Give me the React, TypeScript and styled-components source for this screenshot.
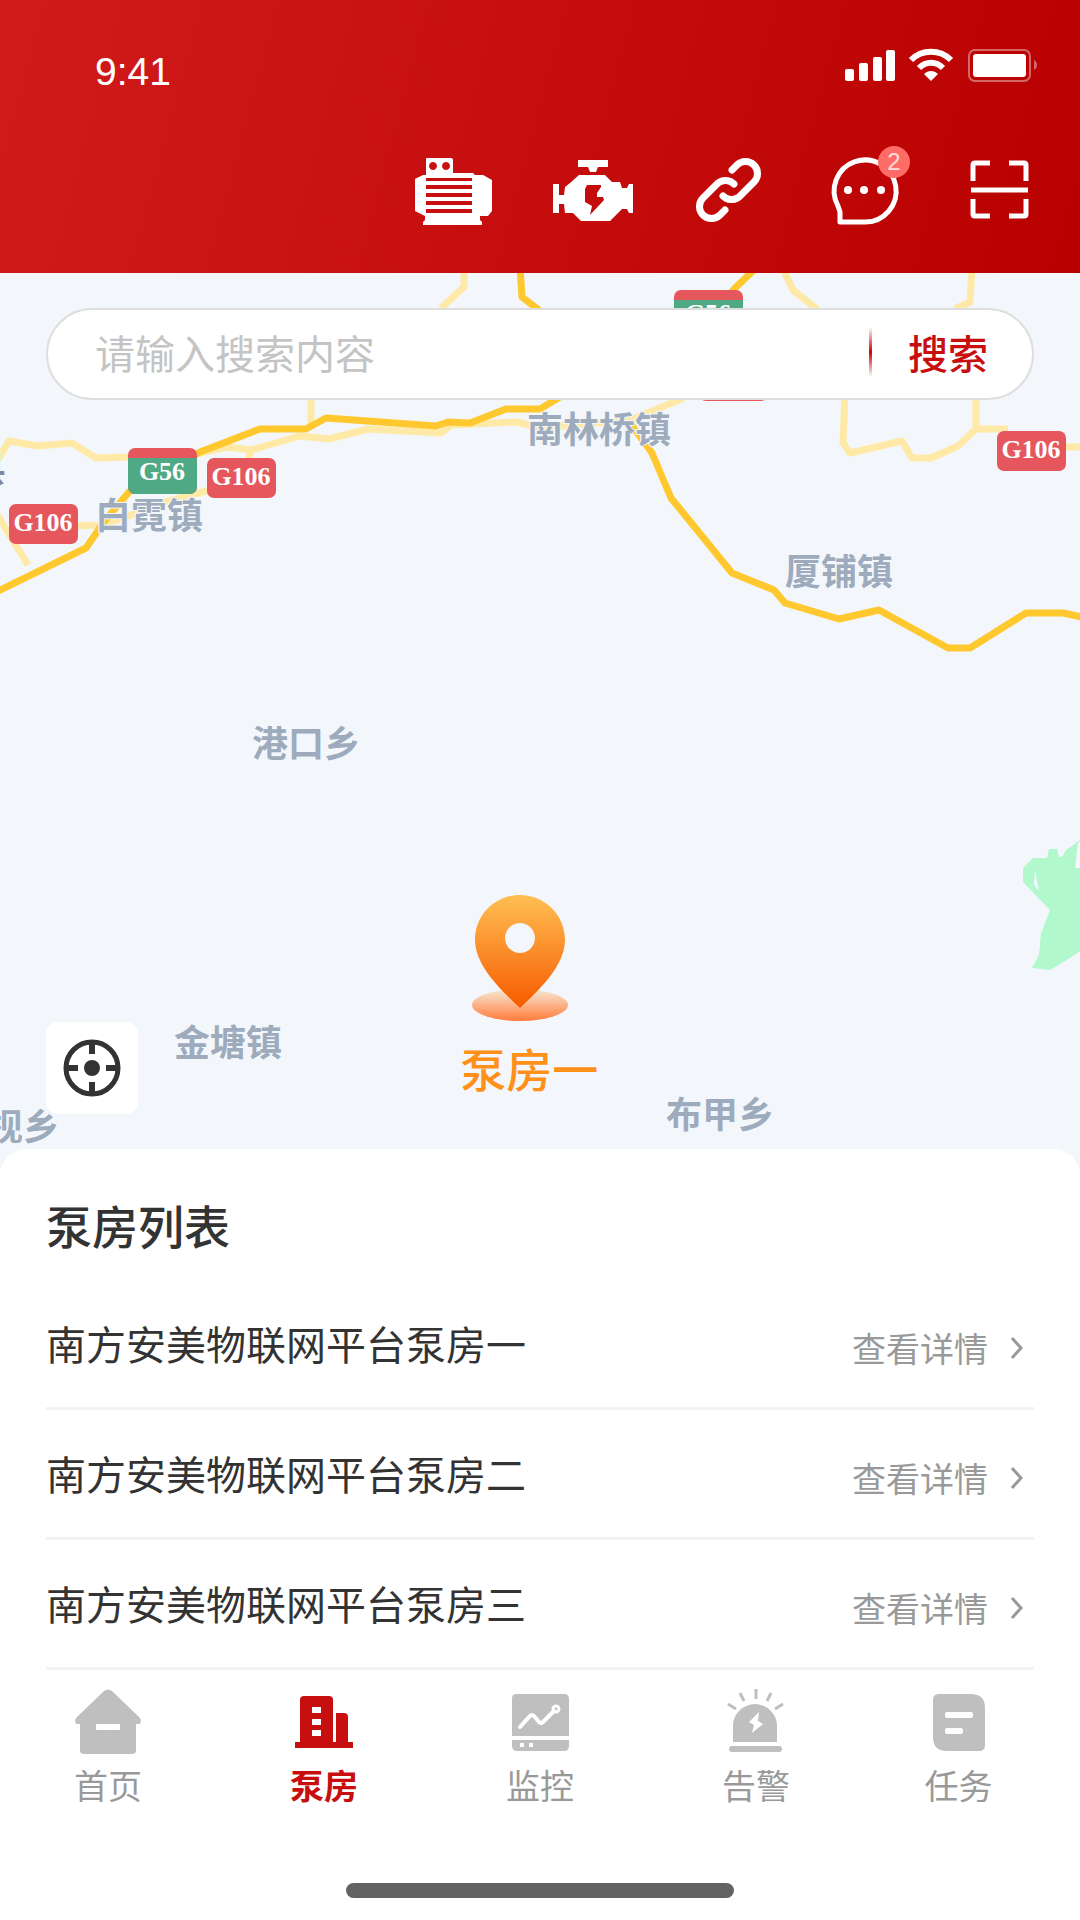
import React, { useState } from "react";
import styled, { createGlobalStyle } from "styled-components";

const palette = {
  primary: "#c70f0f",
  header_from: "#d11b1a",
  header_to: "#b90000",
  map: "#f3f7fc",
  road: "#ffc82e",
  road_light: "#ffe9a6",
  shield_red: "#e5575d",
  shield_green: "#50a985",
  place: "#9dabbd",
  marker: "#ff911a",
  text1: "#333333",
  text2: "#999999",
  placeholder: "#c4c4c4",
  icon: "#bfbfbf",
  line: "#f3f3f3",
};

interface IRoom {
  id: number;
  name: string;
}

interface IPlace {
  name: string;
  x: number;
  y: number;
  anchor?: "middle" | "end";
  color?: string;
}

interface IShield {
  code: string;
  x: number;
  y: number;
}

const ROOMS: IRoom[] = [
  { id: 1, name: "南方安美物联网平台泵房一" },
  { id: 2, name: "南方安美物联网平台泵房二" },
  { id: 3, name: "南方安美物联网平台泵房三" },
];

const PLACES: IPlace[] = [
  { name: "白霓镇", x: 149, y: 256 },
  { name: "南林桥镇", x: 599, y: 170 },
  { name: "厦铺镇", x: 839, y: 312 },
  { name: "港口乡", x: 306, y: 484 },
  { name: "金塘镇", x: 228, y: 783 },
  { name: "布甲乡", x: 720, y: 855 },
  { name: "高枧乡", x: 59, y: 867, anchor: "end" },
  { name: "崇阳县", x: 6, y: 209, anchor: "end", color: "#7f8b9c" },
];

const SHIELDS: IShield[] = [
  { code: "G106", x: 9, y: 231 },
  { code: "G56", x: 128, y: 175 },
  { code: "G106", x: 207, y: 185 },
  { code: "G106", x: 997, y: 158 },
  { code: "G56", x: 674, y: 17 },
  { code: "G106", x: 699, y: 88 },
];

const LIGHT_ROADS = [
  "M464 -6V14L441 35",
  "M311 120V156",
  "M-4 190L9 168L38 173L72 170L96 185L130 184",
  "M-4 240L6 256L28 292",
  "M74 253L103 252L131 242L165 229L210 217",
  "M196 181L227 174L251 177L300 163L329 166L368 156L441 160L451 152L517 149L540 155L630 147L684 125",
  "M251 177L248 188",
  "M782 -6L793 17L818 37",
  "M972 -6L970 29L955 36",
  "M845 120L843 170L850 180L902 168L912 185H931L958 173L976 156V120",
  "M976 156H1008",
  "M1060 174H1086",
];

const MAIN_ROADS = [
  "M-6 320L86 275L103 250L129 219L200 179L260 156H306L326 145L436 153L448 149L470 150L506 136H540L560 124",
  "M520 -6L522 24L540 38",
  "M757 -6L735 15L715 40",
  "M630 150L652 180L671 225L732 300L774 317L785 330L839 346L879 337L948 375H970L1026 340H1063L1086 345",
];

function Shield({ code, x, y }: IShield) {
  const isExpressway = code === "G56";

  return (
    <g transform={`translate(${x} ${y})`}>
      <rect
        width="69"
        height={isExpressway ? 46 : 40}
        rx="7"
        fill={palette.shield_red}
      />
      {isExpressway && (
        <path
          d="M0 10H69V39a7 7 0 0 1-7 7H7a7 7 0 0 1-7-7Z"
          fill={palette.shield_green}
        />
      )}
      <ShieldText x="34" y={isExpressway ? 32 : 27}>
        {code}
      </ShieldText>
    </g>
  );
}

function MapCanvas() {
  return (
    <Canvas viewBox="0 0 1080 876" preserveAspectRatio="xMidYMin slice">
      <path
        d="M1023 595L1033 585H1047L1049 576H1057L1059 584H1062L1066 577L1086 563V674L1070 685L1050 697L1032 695L1039 682L1041 660L1050 637L1023 609Z"
        fill="#b2f8cd"
      />
      <path
        d="M1035 597L1039 618L1034 612ZM1078 570L1075 595H1086V566Z"
        fill={palette.map}
      />
      <g
        fill="none"
        stroke={palette.road_light}
        strokeWidth="7"
        strokeLinejoin="round"
      >
        {LIGHT_ROADS.map((d) => (
          <path key={d} d={d} />
        ))}
      </g>
      <g
        fill="none"
        stroke={palette.road}
        strokeWidth="7"
        strokeLinejoin="round"
      >
        {MAIN_ROADS.map((d) => (
          <path key={d} d={d} />
        ))}
      </g>
      {SHIELDS.map((shield) => (
        <Shield key={`${shield.x}-${shield.y}`} {...shield} />
      ))}
      {PLACES.map(({ name, x, y, anchor = "middle", color }) => (
        <PlaceText
          key={name}
          x={x}
          y={y}
          textAnchor={anchor}
          fill={color || palette.place}
        >
          {name}
        </PlaceText>
      ))}
    </Canvas>
  );
}

function StatusIcons() {
  return (
    <svg width="194" height="36" viewBox="0 0 194 36" fill="#fff">
      <rect x="1" y="21" width="9" height="12" rx="2" />
      <rect x="15" y="15" width="9" height="18" rx="2" />
      <rect x="29" y="9" width="9" height="24" rx="2" />
      <rect x="42" y="2" width="9" height="31" rx="2" />
      <g fill="none" stroke="#fff" strokeWidth="6">
        <path d="M67 12C78 1 96 1 107 12" />
        <path d="M75 20C82 13 92 13 99 20" />
      </g>
      <path d="M87 33L80 26C84 22 90 22 94 26Z" />
      <rect
        x="125"
        y="2"
        width="61"
        height="31"
        rx="6"
        fill="none"
        stroke="#fff"
        strokeWidth="2"
        opacity="0.4"
      />
      <rect x="129" y="6" width="53" height="23" rx="3" />
      <path d="M190 12C194 14 194 20 190 22Z" opacity="0.4" />
    </svg>
  );
}

function MotorIcon() {
  return (
    <ActionSvg viewBox="0 0 84 84">
      <path
        fillRule="evenodd"
        d="M14 8H38Q40 8 40 10V23H60L62 25H70L79 30V61L75 66H67V70L69 72V75H10V72L12 70V66L2 61V29L10 25H13V9Q13 8 14 8ZM20 12a4 4 0 1 0 .01 0ZM33 12a4 4 0 1 0 .01 0ZM13 28V31H59V28ZM13 35V39H59V35ZM13 43V47H59V43ZM13 51V55H59V51ZM13 59V63H59V59Z"
      />
    </ActionSvg>
  );
}

function PumpIcon() {
  return (
    <ActionSvg viewBox="0 0 84 84">
      <path d="M29 10H59V17H49L47 22H41L39 17H29Z" />
      <path
        fillRule="evenodd"
        d="M30 25H56L63 32H71L73 38H78L80 34H84V63H80L78 59H73L68 64L61 71H32L24 63H16L15 54H10V63H4V34H10V45H15L16 37L21 33ZM38 35L36 39V52L43 56L41 65L55 50L54 47H48V43L52 37V35Z"
      />
    </ActionSvg>
  );
}

function LinkIcon() {
  return (
    <ActionSvg viewBox="0 0 84 84">
      <g
        fill="none"
        stroke="#fff"
        strokeWidth="7"
        strokeLinecap="round"
        strokeLinejoin="round"
      >
        <path d="M47 20L52 15A12 12 0 0 1 69 32L54 47A12 12 0 0 1 38 46" />
        <path d="M40 60L35 65A12 12 0 0 1 18 48L33 33A12 12 0 0 1 49 34" />
      </g>
    </ActionSvg>
  );
}

function MessageIcon() {
  return (
    <ActionSvg viewBox="0 0 84 84">
      <path
        d="M44 72A31 31 0 1 0 17 56L19 62V72Z"
        fill="none"
        stroke="#fff"
        strokeWidth="5"
        strokeLinejoin="round"
      />
      <circle cx="27" cy="40" r="4" />
      <circle cx="43" cy="40" r="4" />
      <circle cx="60" cy="40" r="4" />
    </ActionSvg>
  );
}

function ScanIcon() {
  return (
    <ActionSvg viewBox="0 0 84 84">
      <path
        d="M16 31V15Q16 13 18 13H33M52 13H67Q69 13 69 15V31M16 49V64Q16 66 18 66H33M52 66H67Q69 66 69 64V49M14 40H71"
        fill="none"
        stroke="#fff"
        strokeWidth="5"
      />
    </ActionSvg>
  );
}

function LocateIcon() {
  return (
    <svg
      width="60"
      height="60"
      viewBox="0 0 60 60"
      fill="none"
      stroke="#333"
      strokeWidth="5"
    >
      <circle cx="30" cy="30" r="26" />
      <path d="M30 4V16M30 44V56M4 30H16M44 30H56" strokeWidth="6" />
      <circle cx="30" cy="30" r="8" fill="#333" stroke="none" />
    </svg>
  );
}

function MarkerIcon() {
  return (
    <svg width="120" height="130" viewBox="0 0 120 130">
      <defs>
        <linearGradient id="pin" x1="0" y1="0" x2="0" y2="1">
          <stop offset="0" stopColor="#ffbf52" />
          <stop offset="1" stopColor="#f75a00" />
        </linearGradient>
        <linearGradient id="ground" x1="0" y1="0" x2="0" y2="1">
          <stop offset="0" stopColor="#f7ead6" />
          <stop offset="1" stopColor="#ff7b3a" />
        </linearGradient>
      </defs>
      <ellipse cx="60" cy="110" rx="48" ry="16" fill="url(#ground)" />
      <path
        fillRule="evenodd"
        fill="url(#pin)"
        d="M60 0C85 0 105 20 105 45C105 71 78 96 60 113C42 96 15 71 15 45C15 20 35 0 60 0ZM60 28a15 15 0 1 0 .01 0Z"
      />
    </svg>
  );
}

function HomeIcon() {
  return (
    <TabSvg viewBox="0 0 72 72">
      <path
        fillRule="evenodd"
        d="M32 4Q36 1 40 4L67 30Q70 33 68 37H64V63Q64 67 60 67H12Q8 67 8 63V37H4Q2 33 5 30ZM25 37Q24 37 24 38V42Q24 43 25 43H47Q48 43 48 42V38Q48 37 47 37Z"
      />
    </TabSvg>
  );
}

function BuildingIcon() {
  return (
    <TabSvg viewBox="0 0 72 72">
      <path
        fillRule="evenodd"
        d="M16 9H41Q45 9 45 13V55H48V26H56Q60 26 60 30V55H65V61H7V55H12V13Q12 9 16 9ZM24 20V26H33V20ZM24 32V38H33V32ZM24 43V49H33V43Z"
      />
    </TabSvg>
  );
}

function MonitorIcon() {
  return (
    <TabSvg viewBox="0 0 72 72">
      <path d="M12 7H60Q65 7 65 12V49H8V12Q8 7 12 7Z" />
      <path
        fillRule="evenodd"
        d="M8 53H65V59Q65 64 60 64H13Q8 64 8 59ZM16 56V60H20V56ZM25 56V60H29V56Z"
      />
      <path
        d="M16 40L26 29Q28 27 30 29L35 35Q37 37 39 35L50 24"
        fill="none"
        stroke="#fff"
        strokeWidth="4"
        strokeLinecap="round"
      />
      <circle
        cx="52"
        cy="22"
        r="3"
        fill="none"
        stroke="#fff"
        strokeWidth="3"
      />
    </TabSvg>
  );
}

function AlarmIcon() {
  return (
    <TabSvg viewBox="0 0 72 72">
      <path
        fillRule="evenodd"
        d="M13 55V39A22 22 0 0 1 57 39V55ZM39 25L29 35L34 38L32 46L43 37L38 34Z"
      />
      <rect x="9" y="59" width="53" height="6" rx="3" />
      <path
        d="M36 2V12M20 6L24 14M51 6L47 14M8 17L16 22M63 17L55 22"
        fill="none"
        stroke="currentColor"
        strokeWidth="3"
      />
    </TabSvg>
  );
}

function TaskIcon() {
  return (
    <TabSvg viewBox="0 0 72 72">
      <path
        fillRule="evenodd"
        d="M16 7H48Q62 7 62 21V58Q62 64 56 64H24Q10 64 10 50V13Q10 7 16 7ZM24 25Q22 25 22 27V29Q22 31 24 31H48Q50 31 50 29V27Q50 25 48 25ZM24 41Q22 41 22 43V45Q22 47 24 47H38Q40 47 40 45V43Q40 41 38 41Z"
      />
    </TabSvg>
  );
}

const ACTIONS = [
  { label: "电机", icon: <MotorIcon /> },
  { label: "水泵", icon: <PumpIcon /> },
  { label: "链接", icon: <LinkIcon /> },
  { label: "消息", icon: <MessageIcon />, count: 2 },
  { label: "扫码", icon: <ScanIcon /> },
];

const TABS = [
  { label: "首页", icon: <HomeIcon /> },
  { label: "泵房", icon: <BuildingIcon /> },
  { label: "监控", icon: <MonitorIcon /> },
  { label: "告警", icon: <AlarmIcon /> },
  { label: "任务", icon: <TaskIcon /> },
];

function App() {
  const [keyword, setKeyword] = useState("");
  const [activeTab, setActiveTab] = useState("泵房");

  return (
    <>
      <GlobalStyle />
      <Page>
        <Header>
          <StatusBar>
            <Time>9:41</Time>
            <StatusIcons />
          </StatusBar>
          <Actions>
            {ACTIONS.map(({ label, icon, count }) => (
              <ActionButton key={label} type="button" aria-label={label}>
                {icon}
                {count && <Badge>{count}</Badge>}
              </ActionButton>
            ))}
          </Actions>
        </Header>

        <MapArea>
          <MapCanvas />
          <SearchForm onSubmit={(e) => e.preventDefault()}>
            <SearchInput
              type="text"
              aria-label="搜索内容"
              placeholder="请输入搜索内容"
              value={keyword}
              onChange={(e) => setKeyword(e.target.value)}
            />
            <SearchDivider />
            <SearchButton type="submit">搜索</SearchButton>
          </SearchForm>
          <Marker type="button">
            <MarkerIcon />
            泵房一
          </Marker>
          <LocateButton type="button" aria-label="定位">
            <LocateIcon />
          </LocateButton>
        </MapArea>

        <Sheet>
          <SheetTitle>泵房列表</SheetTitle>
          <RoomList>
            {ROOMS.map(({ id, name }) => (
              <RoomItem key={id}>
                <RoomName>{name}</RoomName>
                <DetailLink href={`#room-${id}`}>
                  查看详情
                  <svg width="14" height="24" viewBox="0 0 14 24">
                    <path
                      d="M2 2L11 12L2 22"
                      fill="none"
                      stroke="currentColor"
                      strokeWidth="3"
                    />
                  </svg>
                </DetailLink>
              </RoomItem>
            ))}
          </RoomList>
          <TabBar>
            {TABS.map(({ label, icon }) => (
              <TabLink
                key={label}
                href={`#${label}`}
                $active={label === activeTab}
                onClick={() => setActiveTab(label)}
              >
                {icon}
                <span>{label}</span>
              </TabLink>
            ))}
          </TabBar>
          <HomeIndicator />
        </Sheet>
      </Page>
    </>
  );
}

const GlobalStyle = createGlobalStyle`
  * {
    box-sizing: border-box;
  }

  body {
    margin: 0;
    background-color: ${palette.map};
    color: ${palette.text1};
    font-family: "Noto Sans CJK SC", sans-serif;
  }

  button {
    padding: 0;
    border: 0;
    background: none;
    font-family: inherit;
    cursor: pointer;
  }

  svg {
    display: block;
  }
`;

const Page = styled.div`
  display: flex;
  flex-direction: column;
  min-height: 100vh;
`;

const Header = styled.header`
  padding: 48px 39px 39px 95px;
  background: linear-gradient(
    105deg,
    ${palette.header_from},
    ${palette.header_to}
  );
`;

const StatusBar = styled.div`
  display: flex;
  justify-content: space-between;
  align-items: flex-start;
  padding-right: 3px;
`;

const Time = styled.span`
  color: #fff;
  font-family: "Liberation Sans", sans-serif;
  font-size: 39px;
  line-height: 48px;
`;

const Actions = styled.div`
  display: flex;
  justify-content: flex-end;
  gap: 52px;
  margin-top: 54px;
`;

const ActionButton = styled.button`
  position: relative;
`;

const ActionSvg = styled.svg`
  width: 84px;
  height: 84px;
  fill: #fff;
`;

const Badge = styled.span`
  position: absolute;
  top: -4px;
  right: -5px;
  width: 32px;
  height: 32px;
  border-radius: 50%;
  background-color: #ff6b66;
  color: #ffdedb;
  font-family: "Liberation Sans", sans-serif;
  font-size: 24px;
  line-height: 32px;
  text-align: center;
`;

const MapArea = styled.main`
  position: relative;
  flex: 1;
  display: flex;
  flex-direction: column;
  min-height: 876px;
  padding: 35px 46px;
  overflow: hidden;
`;

const Canvas = styled.svg`
  position: absolute;
  inset: 0;
  width: 100%;
  height: 100%;
`;

const PlaceText = styled.text`
  font-size: 36px;
  font-weight: bold;
  paint-order: stroke;
  stroke: ${palette.map};
  stroke-width: 2px;
`;

const ShieldText = styled.text`
  fill: #fff;
  font-family: "Liberation Serif", serif;
  font-size: 26px;
  font-weight: bold;
  text-anchor: middle;
`;

const SearchForm = styled.form`
  position: relative;
  display: flex;
  align-items: center;
  height: 92px;
  padding: 0 44px 4px 47px;
  border: 2px solid #dedede;
  border-radius: 46px;
  background-color: #fff;
`;

const SearchInput = styled.input`
  flex: 1;
  min-width: 0;
  padding: 0;
  border: 0;
  outline: 0;
  background: none;
  color: ${palette.text1};
  font-family: inherit;
  font-size: 40px;
  line-height: 60px;

  &::placeholder {
    color: ${palette.placeholder};
    opacity: 1;
  }
`;

const SearchDivider = styled.span`
  width: 3px;
  height: 50px;
  margin-right: 36px;
  background: linear-gradient(#fff, #d40000, #fff);
`;

const SearchButton = styled.button`
  color: ${palette.primary};
  font-size: 40px;
  font-weight: 500;
  line-height: 60px;
`;

const Marker = styled.button`
  position: absolute;
  top: 622px;
  left: 49%;
  display: flex;
  flex-direction: column;
  align-items: flex-start;
  gap: 12px;
  transform: translateX(-50%);
  color: ${palette.marker};
  font-size: 46px;
  font-weight: 500;
  line-height: 60px;
`;

const LocateButton = styled.button`
  position: relative;
  display: flex;
  justify-content: center;
  align-items: center;
  width: 92px;
  height: 92px;
  margin-top: auto;
  border-radius: 12px;
  background-color: #fff;
`;

const Sheet = styled.section`
  padding: 43px 0 22px;
  border-radius: 26px 26px 0 0;
  background-color: #fff;
`;

const SheetTitle = styled.h1`
  margin: 0 46px 24px;
  font-size: 46px;
  font-weight: 500;
  line-height: 64px;
`;

const RoomList = styled.ul`
  margin: 0 46px;
  padding: 0;
  list-style: none;
`;

const RoomItem = styled.li`
  display: flex;
  justify-content: space-between;
  align-items: flex-end;
  padding: 33px 10px 34px 0;
  border-bottom: 3px solid ${palette.line};
`;

const RoomName = styled.span`
  font-size: 40px;
  line-height: 60px;
`;

const DetailLink = styled.a`
  display: flex;
  align-items: center;
  gap: 22px;
  color: ${palette.text2};
  font-size: 34px;
  line-height: 50px;
  text-decoration: none;
`;

const TabBar = styled.nav`
  display: grid;
  grid-template-columns: repeat(4, 8fr) 7fr;
  padding: 17px 27px 0 0;
`;

const TabSvg = styled.svg`
  width: 72px;
  height: 72px;
  fill: currentColor;
`;

const TabLink = styled.a<{ $active: boolean }>`
  display: flex;
  flex-direction: column;
  align-items: center;
  gap: 2px;
  color: ${({ $active }) => ($active ? palette.primary : palette.icon)};
  font-size: 34px;
  font-weight: ${({ $active }) => ($active ? 700 : 400)};
  line-height: 48px;
  text-decoration: none;

  span {
    color: ${({ $active }) => ($active ? palette.primary : palette.text2)};
  }
`;

const HomeIndicator = styled.div`
  width: 36%;
  height: 15px;
  margin: 74px auto 0;
  border-radius: 8px;
  background-color: #636363;
`;

export default App;
